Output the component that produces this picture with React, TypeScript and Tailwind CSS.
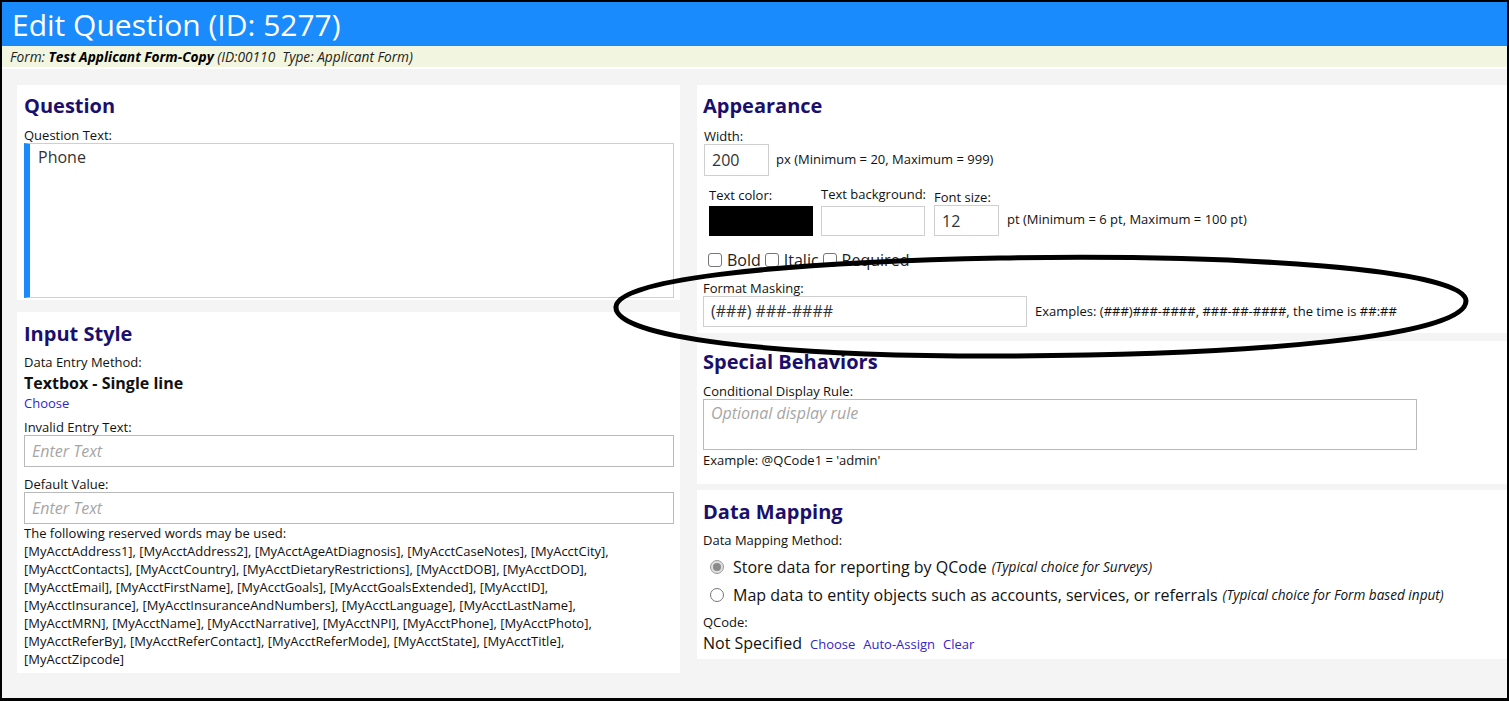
import React from 'react';

const reservedLines = [
  '[MyAcctAddress1], [MyAcctAddress2], [MyAcctAgeAtDiagnosis], [MyAcctCaseNotes], [MyAcctCity],',
  '[MyAcctContacts], [MyAcctCountry], [MyAcctDietaryRestrictions], [MyAcctDOB], [MyAcctDOD],',
  '[MyAcctEmail], [MyAcctFirstName], [MyAcctGoals], [MyAcctGoalsExtended], [MyAcctID],',
  '[MyAcctInsurance], [MyAcctInsuranceAndNumbers], [MyAcctLanguage], [MyAcctLastName],',
  '[MyAcctMRN], [MyAcctName], [MyAcctNarrative], [MyAcctNPI], [MyAcctPhone], [MyAcctPhoto],',
  '[MyAcctReferBy], [MyAcctReferContact], [MyAcctReferMode], [MyAcctState], [MyAcctTitle],',
  '[MyAcctZipcode]',
];

const Heading = ({ children }: { children: React.ReactNode }) => (
  <h2 className="text-[20px] leading-[28px] font-bold text-[#1b0f6d]">{children}</h2>
);

const Label = ({ children, className = '' }: { children: React.ReactNode; className?: string }) => (
  <div className={`text-[13px] leading-[16px] text-[#111] ${className}`}>{children}</div>
);

const Checkbox = ({ label }: { label: string }) => (
  <label className="flex items-center">
    <span className="w-[14px] h-[14px] border border-[#767676] rounded-[3px] bg-white mr-[5px]" />
    <span className="text-[16px] leading-[20px] text-[#222]">{label}</span>
  </label>
);

const Radio = ({ checked, label, note }: { checked?: boolean; label: string; note: string }) => (
  <div className="flex items-center h-[28px] pl-[7px]">
    <span
      className={`w-[14px] h-[14px] rounded-full border flex items-center justify-center mr-[9px] ${
        checked ? 'border-[#9a9a9a] bg-[#e0e0e0]' : 'border-[#767676] bg-white'
      }`}
    >
      {checked && <span className="w-[8px] h-[8px] rounded-full bg-[#8a8a8a]" />}
    </span>
    <span className="text-[16px] text-[#111]">{label}</span>
    <span className="ml-[5px] text-[13.6px] italic text-[#111]">{note}</span>
  </div>
);

export default function App() {
  return (
    <div className="relative w-[1509px] h-[701px] overflow-hidden border-2 border-b-[3px] border-black bg-[#f4f4f4] font-['Open_Sans',sans-serif] text-[#111]">
      {/* Title bar */}
      <div className="h-[44px] bg-[#1a8bfd] border-b border-[#3b7fc4] px-[10px] pt-[2px] text-white text-[30px] leading-[42px]">
        Edit Question (ID: 5277)
      </div>
      <div className="h-[21px] bg-[#f2f5df] px-[8px] text-[13.7px] leading-[22px] italic text-[#222] whitespace-pre">
        Form: <span className="font-bold text-black">Test Applicant Form-Copy</span> (ID:00110  Type: Applicant Form)
      </div>
      <div className="h-[2px] bg-white" />

      <div className="flex gap-[17px] pl-[15px] pt-[16px]">
        {/* Left column */}
        <div className="w-[663px] flex flex-col gap-[12px]">
          <section className="bg-white pl-[7px] pr-[6px] pt-[7px] pb-[2px]">
            <Heading>Question</Heading>
            <Label className="mt-[7px]">Question Text:</Label>
            <div className="h-[155px] border border-[#cfcfcf] border-l-[6px] border-l-[#1a8bfd] pl-[8px] pt-[2px] text-[16px] leading-[22px] text-[#333]">
              Phone
            </div>
          </section>

          <section className="bg-white pl-[7px] pr-[6px] pt-[8px] pb-[5px]">
            <Heading>Input Style</Heading>
            <Label className="mt-[6px]">Data Entry Method:</Label>
            <div className="text-[16px] leading-[22px] font-bold mt-[2px]">Textbox - Single line</div>
            <div className="text-[13px] leading-[16px] mt-[1px] text-[#3424c8]">Choose</div>
            <Label className="mt-[8px]">Invalid Entry Text:</Label>
            <div className="h-[32px] border border-[#b9b9b9] px-[7px] text-[16px] leading-[30px] italic text-[#a6a6a6]">
              Enter Text
            </div>
            <Label className="mt-[9px]">Default Value:</Label>
            <div className="h-[32px] border border-[#b9b9b9] px-[7px] text-[16px] leading-[30px] italic text-[#a6a6a6]">
              Enter Text
            </div>
            <div className="text-[13px] leading-[18px] text-[#111]">
              <div>The following reserved words may be used:</div>
              {reservedLines.map(line => (
                <div key={line} className="whitespace-nowrap">
                  {line}
                </div>
              ))}
            </div>
          </section>
        </div>

        {/* Right column */}
        <div className="flex-1 flex flex-col">
          <section className="bg-white pl-[6px] pt-[7px] h-[248px]">
            <Heading>Appearance</Heading>
            <Label className="mt-[8px] pl-[1px]">Width:</Label>
            <div className="flex items-center pl-[1px]">
              <div className="w-[65px] h-[32px] border border-[#cfcfcf] px-[7px] text-[16px] leading-[30px] text-[#333]">
                200
              </div>
              <span className="ml-[7px] text-[13px]">px (Minimum = 20, Maximum = 999)</span>
            </div>

            <div className="flex items-end mt-[10px] pl-[6px]">
              <div>
                <Label>Text color:</Label>
                <div className="w-[104px] h-[30px] bg-black mt-[3px]" />
              </div>
              <div className="ml-[8px]">
                <Label>Text background:</Label>
                <div className="w-[104px] h-[30px] border border-[#cfcfcf] mt-[4px]" />
              </div>
              <div className="ml-[8px]">
                <Label className="translate-y-[2px]">Font size:</Label>
                <div className="w-[65px] h-[31px] border border-[#cfcfcf] px-[7px] text-[16px] leading-[30px] text-[#333] mt-[2px]">
                  12
                </div>
              </div>
              <span className="ml-[8px] mb-[7px] text-[13px]">pt (Minimum = 6 pt, Maximum = 100 pt)</span>
            </div>

            <div className="flex items-center gap-[4px] mt-[14px] pl-[5px]">
              <Checkbox label="Bold" />
              <Checkbox label="Italic" />
              <Checkbox label="Required" />
            </div>

            <Label className="mt-[10px]">Format Masking:</Label>
            <div className="flex items-center">
              <div className="w-[324px] h-[31px] border border-[#cfcfcf] px-[7px] text-[16px] leading-[29px] text-[#333]">
                (###) ###-####
              </div>
              <span className="ml-[8px] text-[13px]">Examples: (###)###-####, ###-##-####, the time is ##:##</span>
            </div>
          </section>

          <section className="bg-white pl-[6px] pt-[7px] mt-[8px] h-[143px]">
            <Heading>Special Behaviors</Heading>
            <Label className="mt-[7px]">Conditional Display Rule:</Label>
            <div className="w-[714px] h-[51px] border border-[#b9b9b9] px-[7px] pt-[2px] text-[16px] leading-[22px] italic text-[#a6a6a6]">
              Optional display rule
            </div>
            <Label className="mt-[2px]">Example: @QCode1 = 'admin'</Label>
          </section>

          <section className="bg-white pl-[6px] pt-[8px] mt-[6px] h-[169px]">
            <Heading>Data Mapping</Heading>
            <Label className="mt-[6px]">Data Mapping Method:</Label>
            <div className="mt-[5px]">
              <Radio checked label="Store data for reporting by QCode" note="(Typical choice for Surveys)" />
              <Radio label="Map data to entity objects such as accounts, services, or referrals" note="(Typical choice for Form based input)" />
            </div>
            <Label className="mt-[5px]">QCode:</Label>
            <div className="flex items-baseline mt-[2px]">
              <span className="text-[16px] leading-[22px]">Not Specified</span>
              <span className="ml-[8px] text-[13px] text-[#3424c8]">Choose</span>
              <span className="ml-[8px] text-[13px] text-[#3424c8]">Auto-Assign</span>
              <span className="ml-[8px] text-[13px] text-[#3424c8]">Clear</span>
            </div>
          </section>
        </div>
      </div>

      {/* Hand-drawn annotation ellipse */}
      <svg className="absolute inset-0 pointer-events-none" width="1509" height="701">
        <path
          d="M 616 306 C 616 280 760 262 1000 257 C 1240 253 1466 268 1466 300 C 1466 336 1250 354 1010 355 C 770 356 614 336 616 306 Z"
          fill="none"
          stroke="black"
          strokeWidth="5"
          transform="translate(-2 -1)"
        />
      </svg>
    </div>
  );
}
